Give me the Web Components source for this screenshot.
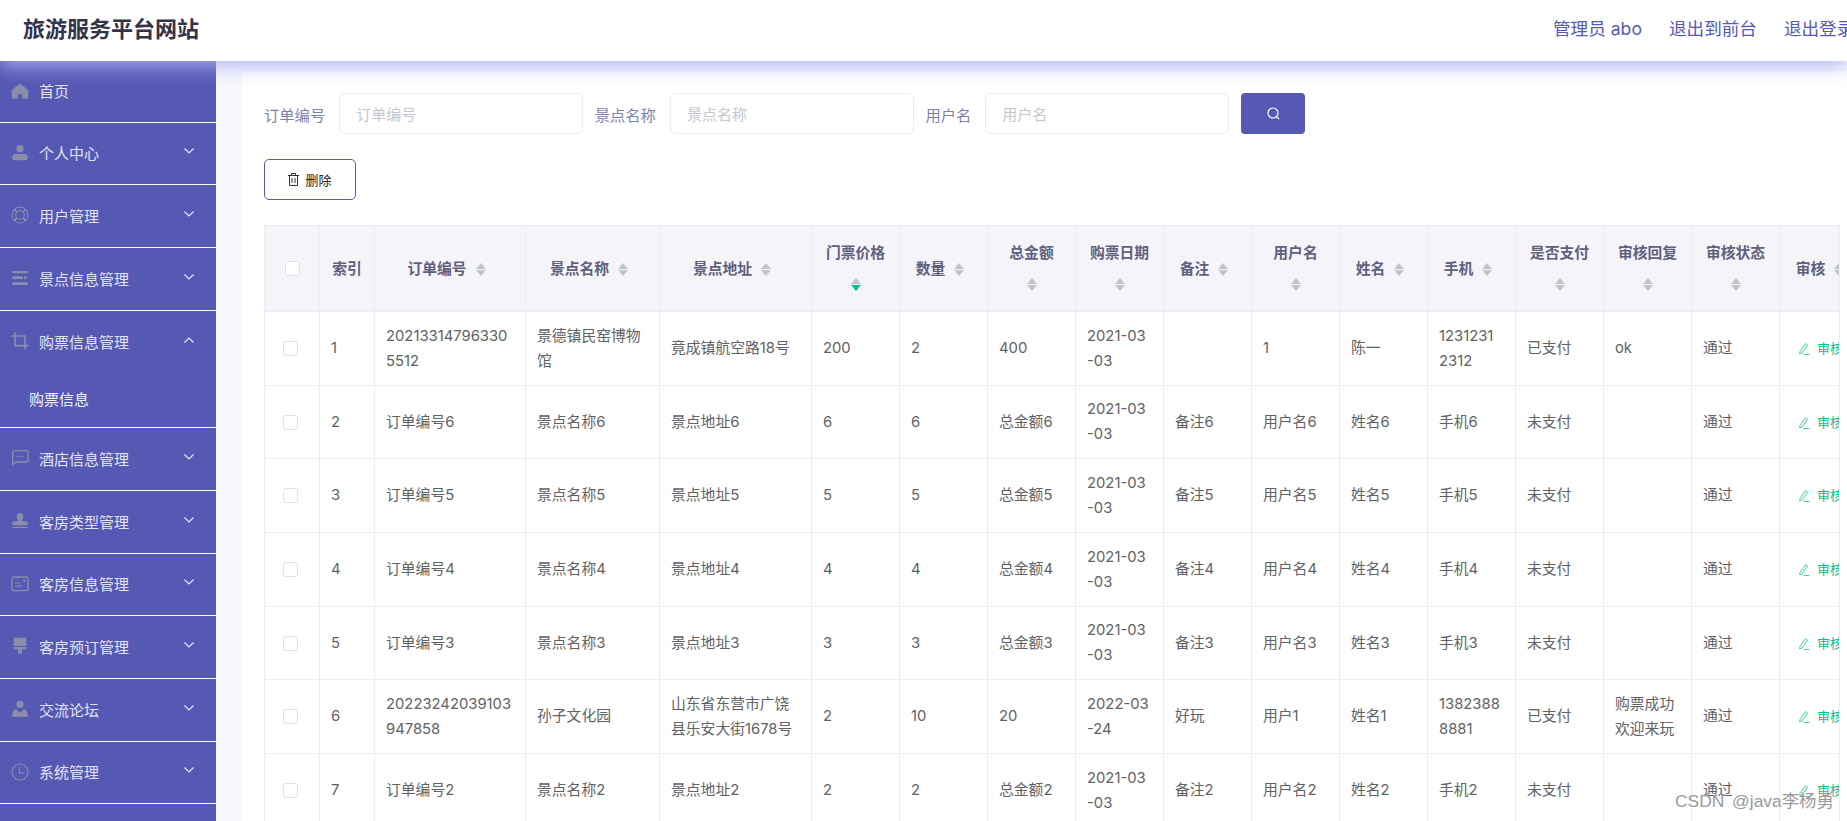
<!DOCTYPE html>
<html lang="zh">
<head>
<meta charset="utf-8">
<title>旅游服务平台网站</title>
<style>
    html, body { margin: 0; height: 100%; overflow: hidden; background: #fff; }
    body { font-family: Inter, "Noto Sans CJK SC", sans-serif; }
</style>
</head>
<body>
<app-shell></app-shell>
<script>
// icons are drawn in a 54x54 box, 3 units to a pixel
const ICONS = {
    home: '<path d="M27 5 L3 25 V49 H20 V36 H34 V49 H51 V25 Z" fill="currentColor" stroke="currentColor" stroke-width="2" stroke-linejoin="round"/>',
    user: '<circle cx="27" cy="14" r="11" fill="currentColor"/><rect x="4" y="30" width="46" height="19" rx="7" fill="currentColor"/>',
    help: '<g fill="none" stroke="currentColor" stroke-width="3"><circle cx="27" cy="27" r="24"/><circle cx="27" cy="27" r="13"/><path d="M10 10 L18 18 M44 10 L36 18 M10 44 L18 36 M44 44 L36 36" stroke-width="5"/></g>',
    unfold: '<path d="M4 6 H50 V13 H4 Z M4 22 H36 V30 H4 Z M4 40 H50 V48 H4 Z M40 20 L50 26 L40 32 Z" fill="currentColor"/>',
    crop: '<path d="M12 1 V41 H52 M1 12 H42 V52" fill="none" stroke="currentColor" stroke-width="5"/>',
    chat: '<path d="M5 47 V9 Q5 5 9 5 H47 Q51 5 51 9 V35 Q51 39 47 39 H13 Z" fill="none" stroke="currentColor" stroke-width="4" stroke-linejoin="round"/><path d="M17 20 h4 v4 h-4z M26 20 h4 v4 h-4z M35 20 h4 v4 h-4z" fill="currentColor"/>',
    stamp: '<path d="M27 3 C35 3 38 9 37 15 C36 20 33 22 33 28 H45 Q50 28 50 33 V40 H4 V33 Q4 28 9 28 H21 C21 22 18 20 17 15 C16 9 19 3 27 3 Z M4 44 H50 V48 H4 Z" fill="currentColor"/>',
    card: '<rect x="3" y="6" width="48" height="41" rx="4" fill="none" stroke="currentColor" stroke-width="4"/><path d="M12 24 H28 M12 33 H34" stroke="currentColor" stroke-width="3.4"/><rect x="37" y="14" width="7" height="6" fill="currentColor"/>',
    brush: '<path d="M8 2 H46 V27 H8 Z M8 30 H46 V37 H33 V50 H21 V37 H8 Z" fill="currentColor"/>',
    person: '<circle cx="27" cy="13" r="11" fill="currentColor"/><path d="M15 28 L27 38 L39 28 C46 30 50 36 51 50 H3 C4 36 8 30 15 28 Z" fill="currentColor"/>',
    time: '<circle cx="27" cy="27" r="24" fill="none" stroke="currentColor" stroke-width="3.4"/><path d="M25 11 V30 H40" fill="none" stroke="currentColor" stroke-width="3.4"/>'
};

class AppShell extends HTMLElement {
    constructor() {
        super();
        this.attachShadow({ mode: 'open' });
    }

    connectedCallback() {
        this.shadowRoot.innerHTML = `
            <style>
                :host {
                    display: flex;
                    flex-direction: column;
                    width: 1847px;
                    height: 821px;
                    overflow: hidden;
                    position: relative;
                }
                .body {
                    display: flex;
                    flex: 1;
                    min-height: 0;
                }
                water-mark {
                    position: absolute;
                    left: 1675px;
                    top: 788px;
                }
            </style>
            <top-bar></top-bar>
            <div class="body">
                <side-bar></side-bar>
                <main-panel></main-panel>
            </div>
            <water-mark>CSDN @java李杨勇</water-mark>
        `;
    }
}

class TopBar extends HTMLElement {
    constructor() {
        super();
        this.attachShadow({ mode: 'open' });
    }

    connectedCallback() {
        this.shadowRoot.innerHTML = `
            <style>
                :host {
                    display: flex;
                    flex: none;
                    align-items: center;
                    justify-content: space-between;
                    height: 61px;
                    padding: 0 0 7px 23px;
                    box-sizing: border-box;
                    background: #fff;
                    box-shadow: 0 4px 20px rgb(176, 176, 245);
                    position: relative;
                    z-index: 2;
                    overflow: visible;
                }
                h1 {
                    margin: 0;
                    font: 700 22px "Noto Sans CJK SC", sans-serif;
                    color: #33334a;
                }
                nav {
                    display: flex;
                    gap: 27px;
                    width: 294px;
                    flex: none;
                    overflow: hidden;
                    white-space: nowrap;
                    font-size: 17.6px;
                    color: #5659b4;
                }
            </style>
            <h1>旅游服务平台网站</h1>
            <nav>
                <span>管理员 abo</span>
                <span>退出到前台</span>
                <span>退出登录</span>
            </nav>
        `;
    }
}

class SideBar extends HTMLElement {
    constructor() {
        super();
        this.attachShadow({ mode: 'open' });
    }

    connectedCallback() {
        const items = [
            ['home', '首页', 62, false],
            ['user', '个人中心', 62, true],
            ['help', '用户管理', 63, true],
            ['unfold', '景点信息管理', 63, true],
            ['crop', '购票信息管理', 117, true],
            ['chat', '酒店信息管理', 63, true],
            ['stamp', '客房类型管理', 63, true],
            ['card', '客房信息管理', 62, true],
            ['brush', '客房预订管理', 63, true],
            ['person', '交流论坛', 63, true],
            ['time', '系统管理', 62, true]
        ];
        this.shadowRoot.innerHTML = `
            <style>
                :host {
                    display: block;
                    flex: none;
                    width: 216px;
                    background: #5659b4;
                    overflow: hidden;
                }
            </style>
            ${items.map(([icon, label, height, arrow]) => `
                <nav-item icon="${icon}" label="${label}" style="height:${height}px" ${arrow ? 'arrow' : ''} ${height > 100 ? 'open' : ''}>
                    ${height > 100 ? '购票信息' : ''}
                </nav-item>
            `).join('')}
        `;
    }
}

class NavItem extends HTMLElement {
    constructor() {
        super();
        this.attachShadow({ mode: 'open' });
    }

    connectedCallback() {
        const open = this.hasAttribute('open');
        const arrow = this.hasAttribute('arrow')
            ? `<svg class="arrow" width="10" height="6" viewBox="0 0 10 6"><path d="${open ? 'M.5 5.5 L5 1 L9.5 5.5' : 'M.5 .5 L5 5 L9.5 .5'}" fill="none" stroke="#e6e6fa" stroke-width="1.2"/></svg>`
            : '';
        this.shadowRoot.innerHTML = `
            <style>
                :host {
                    display: flex;
                    flex-direction: column;
                    box-sizing: border-box;
                    border-bottom: 1px solid #fff;
                    font-size: 15px;
                    font-family: "Noto Sans CJK SC", sans-serif;
                    color: #e2e2f2;
                }
                .head {
                    flex: 1;
                    display: flex;
                    align-items: center;
                    gap: 10px;
                    padding: 0 22px 2px 11px;
                    min-height: 0;
                    box-sizing: border-box;
                }
                :host([open]) .head { flex: none; height: 62px; }
                svg.icon { flex: none; color: #8b8da9; }
                .label { flex: 1; }
                .arrow { flex: none; margin-top: -3px; }
                .sub {
                    flex: 1;
                    display: flex;
                    align-items: center;
                    padding: 0 0 3px 29px;
                    color: #f2f2ff;
                }
            </style>
            <div class="head">
                <svg class="icon" width="18" height="18" viewBox="0 0 54 54">${ICONS[this.getAttribute('icon')]}</svg>
                <span class="label">${this.getAttribute('label')}</span>
                ${arrow}
            </div>
            ${open ? '<div class="sub"><slot></slot></div>' : ''}
        `;
    }
}

class MainPanel extends HTMLElement {
    constructor() {
        super();
        this.attachShadow({ mode: 'open' });
    }

    connectedCallback() {
        this.shadowRoot.innerHTML = `
            <style>
                :host {
                    display: block;
                    flex: 1;
                    min-width: 0;
                    background: #f6f7fb;
                    padding: 10px 0 0 26px;
                    overflow: hidden;
                }
                .panel {
                    background: #fff;
                    height: 100%;
                    padding: 22px 7px 0 22px;
                    box-sizing: border-box;
                    display: flex;
                    flex-direction: column;
                    gap: 25px;
                }
            </style>
            <div class="panel">
                <search-bar></search-bar>
                <delete-button>删除</delete-button>
                <order-table></order-table>
            </div>
        `;
    }
}

class SearchBar extends HTMLElement {
    constructor() {
        super();
        this.attachShadow({ mode: 'open' });
    }

    connectedCallback() {
        const fields = ['订单编号', '景点名称', '用户名'];
        this.shadowRoot.innerHTML = `
            <style>
                :host {
                    display: flex;
                    align-items: center;
                    gap: 11.5px;
                    height: 41px;
                    flex: none;
                    font-family: "Noto Sans CJK SC", sans-serif;
                }
                label {
                    display: flex;
                    align-items: center;
                    gap: 14px;
                    font-size: 15.3px;
                    color: #7f81ad;
                }
                input {
                    width: 244px;
                    height: 41px;
                    box-sizing: border-box;
                    padding: 0 16px;
                    border: 1px solid #ebebfa;
                    border-radius: 5px;
                    outline: none;
                    font: 15px "Noto Sans CJK SC", sans-serif;
                    background: #fff;
                }
                input::placeholder { color: #c4c6cf; }
                button {
                    width: 64.5px;
                    height: 41px;
                    border: none;
                    border-radius: 4px;
                    background: #5659b4;
                    display: flex;
                    align-items: center;
                    justify-content: center;
                    padding: 0;
                }
            </style>
            ${fields.map(f => `<label>${f}<input placeholder="${f}"></label>`).join('')}
            <button aria-label="搜索">
                <svg width="15" height="15" viewBox="0 0 15 15" fill="none" stroke="#fff" stroke-width="1.2"><circle cx="7" cy="7" r="5"/><path d="M10.8 10.8 L13 13"/></svg>
            </button>
        `;
    }
}

class DeleteButton extends HTMLElement {
    constructor() {
        super();
        this.attachShadow({ mode: 'open' });
    }

    connectedCallback() {
        this.shadowRoot.innerHTML = `
            <style>
                :host {
                    display: flex;
                    flex: none;
                    align-items: center;
                    justify-content: center;
                    gap: 6px;
                    width: 92px;
                    height: 41px;
                    box-sizing: border-box;
                    border: 1px solid #5659b4;
                    border-radius: 5px;
                    background: #fff;
                    font: 13px "Noto Sans CJK SC", sans-serif;
                    color: #222;
                }
            </style>
            <svg width="11" height="13" viewBox="0 0 11 13" fill="none" stroke="#333" stroke-width="1"><path d="M0 2.5 H11 M3.5 2.5 V.5 H7.5 V2.5 M1.5 2.5 V12.5 H9.5 V2.5 M4 5 V10 M7 5 V10"/></svg>
            <slot></slot>
        `;
    }
}

class SortCaret extends HTMLElement {
    constructor() {
        super();
        this.attachShadow({ mode: 'open' });
    }

    connectedCallback() {
        this.shadowRoot.innerHTML = `
            <style>
                :host {
                    display: inline-flex;
                    flex-direction: column;
                    gap: 1px;
                    vertical-align: middle;
                }
                i {
                    display: block;
                    width: 0;
                    height: 0;
                    border-left: 5.5px solid transparent;
                    border-right: 5.5px solid transparent;
                }
                .up { border-bottom: 6px solid #c0c4cc; }
                .down { border-top: 6px solid #c0c4cc; }
                :host([active]) .down { border-top-color: #00c292; }
            </style>
            <i class="up"></i>
            <i class="down"></i>
        `;
    }
}

class OrderTable extends HTMLElement {
    constructor() {
        super();
        this.attachShadow({ mode: 'open' });
    }

    connectedCallback() {
        // [title, width, sortable, caret on its own line]
        const columns = [
            ['索引', 55, false, false],
            ['订单编号', 151, true, false],
            ['景点名称', 134, true, false],
            ['景点地址', 152, true, false],
            ['门票价格', 88, true, true],
            ['数量', 88, true, false],
            ['总金额', 88, true, true],
            ['购票日期', 88, true, true],
            ['备注', 88, true, false],
            ['用户名', 88, true, true],
            ['姓名', 88, true, false],
            ['手机', 88, true, false],
            ['是否支付', 88, true, true],
            ['审核回复', 88, true, true],
            ['审核状态', 88, true, true],
            ['审核', 88, true, false]
        ];
        const placeholderRow = (n, price, qty) => [
            `订单编号${n}`, `景点名称${n}`, `景点地址${n}`, price, qty, `总金额${n}`, '2021-03\n-03',
            `备注${n}`, `用户名${n}`, `姓名${n}`, `手机${n}`, '未支付', '', '通过'
        ];
        const rows = [
            ['20213314796330\n5512', '景德镇民窑博物\n馆', '竟成镇航空路18号', '200', '2', '400', '2021-03\n-03', '', '1', '陈一', '1231231\n2312', '已支付', 'ok', '通过'],
            placeholderRow(6, '6', '6'),
            placeholderRow(5, '5', '5'),
            placeholderRow(4, '4', '4'),
            placeholderRow(3, '3', '3'),
            ['20223242039103\n947858', '孙子文化园', '山东省东营市广饶\n县乐安大街1678号', '2', '10', '20', '2022-03\n-24', '好玩', '用户1', '姓名1', '1382388\n8881', '已支付', '购票成功\n欢迎来玩', '通过'],
            placeholderRow(2, '2', '2')
        ];
        const heights = [74, 73, 74, 74, 73, 74, 74];

        const head = columns.map(([title, width, sortable, ownLine], i) => `
            <th style="width:${width}px">${title}${sortable
                ? (ownLine ? '<br>' : '<span class="g"></span>') + `<sort-caret ${i === 4 ? 'active' : ''}></sort-caret>` + (ownLine ? '' : '<span class="t"></span>')
                : ''}</th>
        `).join('');

        const body = rows.map((row, r) => `
            <tr style="height:${heights[r]}px">
                <td class="check"><span class="box"></span></td>
                <td>${r + 1}</td>
                ${row.map(cell => `<td>${cell}</td>`).join('')}
                <td class="action">
                    <span class="edit">
                        <svg width="12" height="13" viewBox="0 0 12 13" fill="none" stroke="#3fcfa8" stroke-width="1"><path d="M2 9.5 L7.5 1.5 L9.5 3 L4 11 L1.6 11.8 Z M5.5 12.5 H11.5"/></svg>
                        审核
                    </span>
                </td>
            </tr>
        `).join('');

        this.shadowRoot.innerHTML = `
            <style>
                :host {
                    display: block;
                    flex: 1;
                    min-height: 0;
                    overflow: hidden;
                    border-right: 1px solid #ecedf4;
                    font: 14.8px Inter, "Noto Sans CJK SC", sans-serif;
                    color: #606266;
                }
                table {
                    border-collapse: separate;
                    border-spacing: 0;
                    table-layout: fixed;
                    width: 1604px;
                }
                th, td {
                    box-sizing: border-box;
                    border-right: 1px solid #ecedf4;
                    border-bottom: 1px solid #ecedf4;
                    padding: 0 11px;
                }
                th:first-child, td:first-child { border-left: 1px solid #ecedf4; }
                thead tr { height: 87px; }
                th {
                    border-top: 1px solid #ecedf4;
                    background: #f5f5f9;
                    color: #60607f;
                    font-family: "Noto Sans CJK SC", sans-serif;
                    font-weight: 700;
                    font-size: 14.8px;
                    line-height: 31px;
                    text-align: center;
                    padding-bottom: 3px;
                }
                th.check { padding: 0 0 0 20px; text-align: left; width: 56px; }
                td {
                    line-height: 25px;
                    white-space: pre-line;
                    word-break: break-all;
                }
                td.check { padding: 0 0 0 18px; }
                .box {
                    display: block;
                    width: 15px;
                    height: 15px;
                    box-sizing: border-box;
                    border: 1px solid #dfe1e8;
                    border-radius: 3px;
                    background: #fff;
                }
                .g { display: inline-block; width: 9px; }
                .t { display: inline-block; width: 7px; }
                td.action { padding: 0 0 0 18px; white-space: nowrap; }
                .edit {
                    display: flex;
                    align-items: center;
                    gap: 7px;
                    font-size: 13px;
                    color: #00c292;
                }
            </style>
            <table>
                <thead>
                    <tr>
                        <th class="check"><span class="box"></span></th>
                        ${head}
                    </tr>
                </thead>
                <tbody>${body}</tbody>
            </table>
        `;
    }
}

class WaterMark extends HTMLElement {
    constructor() {
        super();
        this.attachShadow({ mode: 'open' });
    }

    connectedCallback() {
        this.shadowRoot.innerHTML = `
            <style>
                :host {
                    display: block;
                    font: 17.4px "Liberation Sans", "Noto Sans CJK SC", sans-serif;
                    line-height: 26px;
                    word-spacing: 3px;
                    color: #9a9a9a;
                    text-shadow: 1px 1px 1px rgba(255, 255, 255, .8);
                    white-space: nowrap;
                }
            </style>
            <slot></slot>
        `;
    }
}

customElements.define('app-shell', AppShell);
customElements.define('top-bar', TopBar);
customElements.define('side-bar', SideBar);
customElements.define('nav-item', NavItem);
customElements.define('main-panel', MainPanel);
customElements.define('search-bar', SearchBar);
customElements.define('delete-button', DeleteButton);
customElements.define('sort-caret', SortCaret);
customElements.define('order-table', OrderTable);
customElements.define('water-mark', WaterMark);
</script>
</body>
</html>
